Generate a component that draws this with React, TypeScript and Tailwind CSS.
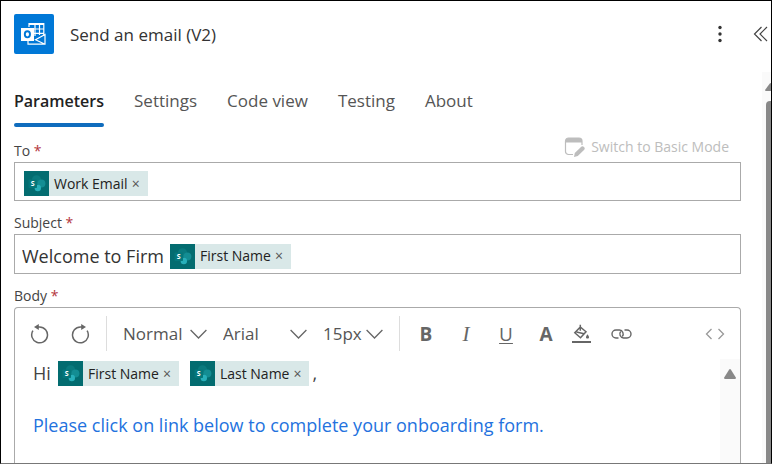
import React from "react";

function SharePointIcon() {
  return (
    <svg className="size-[25px] shrink-0" viewBox="0 0 25 25" aria-hidden="true">
      <rect width="25" height="25" fill="#036c70" />
      <circle cx="12.5" cy="8.8" r="4.600" fill="#0a7a7e" />
      <circle cx="17.400" cy="12.500" r="4" fill="#138d93" />
      <circle cx="13.800" cy="17" r="3.200" fill="#28b0ba" />
      <rect x="4.500" y="8.500" width="8.500" height="8.500" rx="0.8" fill="#04777b" />
      <text x="8.700" y="15.400" textAnchor="middle" fontSize="7" fontWeight="700" fill="#fff">
        S
      </text>
    </svg>
  );
}

function Token({ label }: { label: string }) {
  return (
    <span className="inline-flex h-[25px] shrink-0 items-center bg-[#d9e8e8] align-middle text-[14px] leading-5 text-[#222]">
      <SharePointIcon />
      <span className="pl-[5px]">{label}</span>
      <button type="button" aria-label={`Remove ${label}`} className="w-5 pr-1 text-center text-[14px] text-[#555]">
        ×
      </button>
    </span>
  );
}

function FieldLabel({ htmlFor, id, children }: { htmlFor?: string; id?: string; children: string }) {
  return (
    <label htmlFor={htmlFor} id={id} className="block h-5 text-[14px] leading-5 text-[#444]">
      {children} <span className="text-[#b3353b]">*</span>
    </label>
  );
}

function ToolSelect({ label, value, width }: { label: string; value: string; width: string }) {
  return (
    <span className={`relative flex items-center ${width}`}>
      <select aria-label={label} className="w-full appearance-none bg-transparent text-[17px] leading-6 text-[#555] outline-none">
        <option>{value}</option>
      </select>
      <svg className="pointer-events-none absolute right-0 h-[10px] w-[17px]" viewBox="0 0 17 10" fill="none" stroke="#666" strokeWidth="1.300" aria-hidden="true">
        <path d="M.6 1 8.500 9l7.900-8" />
      </svg>
    </span>
  );
}

function TurnIcon({ flipped = false }: { flipped?: boolean }) {
  return (
    <svg className={flipped ? "size-5 -scale-x-100" : "size-5"} viewBox="0 0 20 20" fill="none" stroke="#666" strokeWidth="1.500" aria-hidden="true">
      <path d="M2.900 6.700A7.900 7.900 0 1 0 9.500 3H7.500" />
      <path d="M8.800 0v6L4 3z" fill="#666" stroke="none" />
    </svg>
  );
}

const tabs = ["Parameters", "Settings", "Code view", "Testing", "About"];

export default function App() {
  return (
    <div className="flex h-screen flex-col overflow-hidden border border-black border-b-[#777] bg-white font-['Open_Sans','Noto_Sans',sans-serif] text-[#333]">
      <header className="flex h-[71px] shrink-0 items-start justify-between overflow-hidden pt-[13px] pl-[13px]">
        <div className="flex items-center gap-4">
          <svg className="size-10" viewBox="0 0 40 40" aria-hidden="true">
            <rect width="40" height="40" rx="2" fill="#0078d7" />
            <g fill="none" stroke="#fff" strokeWidth="1.200">
              <path d="M15 13V9.600h14.800V22M15 10.300h14.800M20 15h9.800M20 19.300h9.800M21 10v12M25.500 10v11" />
              <path d="M14 27v3.200h17V20.500l-9.500 5.200 9.500 4.500" />
            </g>
            <path d="M7 14h13v13H7z" fill="#fff" />
            <ellipse cx="13.400" cy="20.300" rx="2.600" ry="3.100" fill="none" stroke="#0078d7" strokeWidth="1.900" />
          </svg>
          <h1 className="pt-px text-[17px] leading-6 font-medium text-[#333]">Send an email (V2)</h1>
        </div>
        <div className="flex h-10 items-center gap-[29px]">
          <button type="button" aria-label="More options">
            <svg className="h-[18px] w-2" viewBox="0 0 8 18" fill="#333" aria-hidden="true">
              <circle cx="4" cy="2.500" r="1.700" />
              <circle cx="4" cy="9" r="1.700" />
              <circle cx="4" cy="15.500" r="1.700" />
            </svg>
          </button>
          <button type="button" aria-label="Collapse panel" className="pr-[3px]">
            <svg className="h-4 w-[15px]" viewBox="0 0 15 16" fill="none" stroke="#444" strokeWidth="1.200" aria-hidden="true">
              <path d="M8.500 1 1.500 8l7 7M14 1 7 8l7 7" />
            </svg>
          </button>
        </div>
      </header>

      <div className="flex min-h-0 flex-1">
        <main className="flex min-w-0 flex-1 flex-col pr-[21px] pl-[13px]">
          <nav className="flex h-[55px] shrink-0 gap-[30px] pt-[15px]" role="tablist">
            {tabs.map((tab, i) => (
              <button
                key={tab}
                type="button"
                role="tab"
                aria-selected={i === 0}
                className={`flex flex-col justify-between leading-7 ${i === 0 ? "text-[16px] font-semibold text-[#222]" : "text-[17px] text-[#555]"}`}
              >
                {tab}
                {i === 0 && <span className="h-1 w-full rounded-full bg-[#0f6cbd]" />}
              </button>
            ))}
          </nav>

          <div className="flex h-[35px] shrink-0 items-end justify-between pb-px">
            <FieldLabel htmlFor="to">To</FieldLabel>
            <button type="button" className="mb-[2px] flex items-center gap-[6px] pr-3 text-[14px] leading-6 text-[#bdbdbd]">
              <svg className="h-5 w-[21px]" viewBox="0 0 21 20" aria-hidden="true">
                <path d="M9 17.500H4.500a3 3 0 0 1-3-3V4a3 3 0 0 1 3-3H15a3 3 0 0 1 3 3v4" fill="none" stroke="#bdbdbd" strokeWidth="1.200" />
                <path d="M1.500 5.500V4a3 3 0 0 1 3-3H15a3 3 0 0 1 3 3v1.500z" fill="#bdbdbd" />
                <path d="M10 20l.8-4 6.200-6a2 2 0 0 1 3 3l-6.200 6z" fill="#bdbdbd" />
              </svg>
              Switch to Basic Mode
            </button>
          </div>
          <div className="flex h-[39px] shrink-0 items-center border border-[#aaa] pt-1 pl-[9px]">
            <Token label="Work Email" />
            <input id="to" className="min-w-0 flex-1 outline-none" />
          </div>

          <div className="flex h-[33px] shrink-0 items-end pb-px">
            <FieldLabel htmlFor="subject">Subject</FieldLabel>
          </div>
          <div className="flex h-10 shrink-0 items-center border border-[#aaa] pt-1 pl-[7px]">
            <input id="subject" defaultValue="Welcome to Firm" className="w-[148px] text-[18px] text-[#333] outline-none" />
            <Token label="First Name" />
          </div>

          <div className="flex h-[33px] shrink-0 items-end pb-px">
            <FieldLabel id="body-label">Body</FieldLabel>
          </div>
          <section className="flex min-h-0 flex-1 flex-col rounded-t border border-b-0 border-[#aaa]">
            <div className="flex h-[51px] shrink-0 items-center pr-[15px] pl-[15px] text-[#666]" role="toolbar" aria-label="Formatting">
              <button type="button" aria-label="Undo">
                <TurnIcon />
              </button>
              <button type="button" aria-label="Redo" className="ml-5">
                <TurnIcon flipped />
              </button>
              <span className="ml-4 h-[35px] w-px bg-[#ddd]" />
              <div className="ml-4 flex gap-4">
                <ToolSelect label="Block style" value="Normal" width="w-[84px]" />
                <ToolSelect label="Font family" value="Arial" width="w-[84px]" />
                <ToolSelect label="Font size" value="15px" width="w-[60px]" />
              </div>
              <span className="ml-4 h-[35px] w-px bg-[#ddd]" />
              <div className="ml-[18px] flex items-center gap-6 text-[19px] leading-6">
                <button type="button" aria-label="Bold" className="w-4 font-bold">B</button>
                <button type="button" aria-label="Italic" className="w-4 font-['Liberation_Serif',serif] text-[21px] italic">I</button>
                <button type="button" aria-label="Underline" className="w-4 underline underline-offset-2">U</button>
                <button type="button" aria-label="Text colour" className="w-4 font-bold">A</button>
              </div>
              <div className="ml-[18px] flex items-center gap-5">
                <button type="button" aria-label="Background colour">
                  <svg className="h-5 w-[19px]" viewBox="0 0 19 20" fill="none" stroke="#666" strokeWidth="1.500" aria-hidden="true">
                    <path d="M8.300.8v6M8.300 3 2.800 8.800l5.700 5 5.500-6zM4.500 8l7.500 1.800" />
                    <path d="M15.500 10.200c2.100 2.800 1.900 4.300 0 4.300s-2.100-1.500 0-4.300z" fill="#666" stroke="none" />
                    <path d="M0 18h19" strokeWidth="2" />
                  </svg>
                </button>
                <button type="button" aria-label="Insert link">
                  <svg className="h-[10px] w-[21px]" viewBox="0 0 21 10" fill="none" stroke="#666" strokeWidth="1.400" aria-hidden="true">
                    <path d="M7.500 9H5a4 4 0 0 1 0-8h3.500a4 4 0 0 1 2.800 6.500" />
                    <path d="M13.500 1H16a4 4 0 0 1 0 8h-3.500a4 4 0 0 1-2.800-6.500" />
                  </svg>
                </button>
              </div>
              <button type="button" aria-label="Code view" className="ml-auto">
                <svg className="h-3 w-5" viewBox="0 0 20 12" fill="none" stroke="#999" strokeWidth="1.300" aria-hidden="true">
                  <path d="M6.500 1 1.500 6l5 5M13.500 1l5 5-5 5" />
                </svg>
              </button>
            </div>
            <div className="flex min-h-0 flex-1">
              <div
                contentEditable
                suppressContentEditableWarning
                role="textbox"
                aria-multiline="true"
                aria-labelledby="body-label"
                className="min-w-0 flex-1 pl-[18px] text-[18px] text-[#444] outline-none"
              >
                <p className="flex h-[29px] items-center">
                  <span className="w-[25px]">Hi</span>
                  <Token label="First Name" />
                  <span className="w-[11px]" />
                  <Token label="Last Name" />
                  <span className="pl-[3px]">,</span>
                </p>
                <p className="mt-6 leading-[26px] text-[#2372de]">Please click on link below to complete your onboarding form.</p>
              </div>
              <div className="flex w-5 justify-center bg-[#fafafa] pt-[10px]" aria-hidden="true">
                <svg className="h-[10px] w-3" viewBox="0 0 12 10" fill="#888">
                  <path d="M5 .8a1.200 1.200 0 0 1 2 0l4.800 7.700c.4.700 0 1.500-.8 1.500H1c-.8 0-1.200-.8-.8-1.500z" />
                </svg>
              </div>
            </div>
          </section>
        </main>
        <div className="flex w-[9px] shrink-0 flex-col items-end overflow-hidden bg-[#fafafa] pt-[11px]" aria-hidden="true">
          <svg className="h-2 w-[6px] shrink-0" viewBox="0 0 6 8" fill="#888">
            <path d="M6 0v8H1C.2 8-.2 7.500.200 6.800L4.800.5Q5.300 0 6 0z" />
          </svg>
          <span className="mt-[10px] w-[5px] flex-1 rounded-tl-[4px] bg-[#888]" />
        </div>
      </div>
    </div>
  );
}
